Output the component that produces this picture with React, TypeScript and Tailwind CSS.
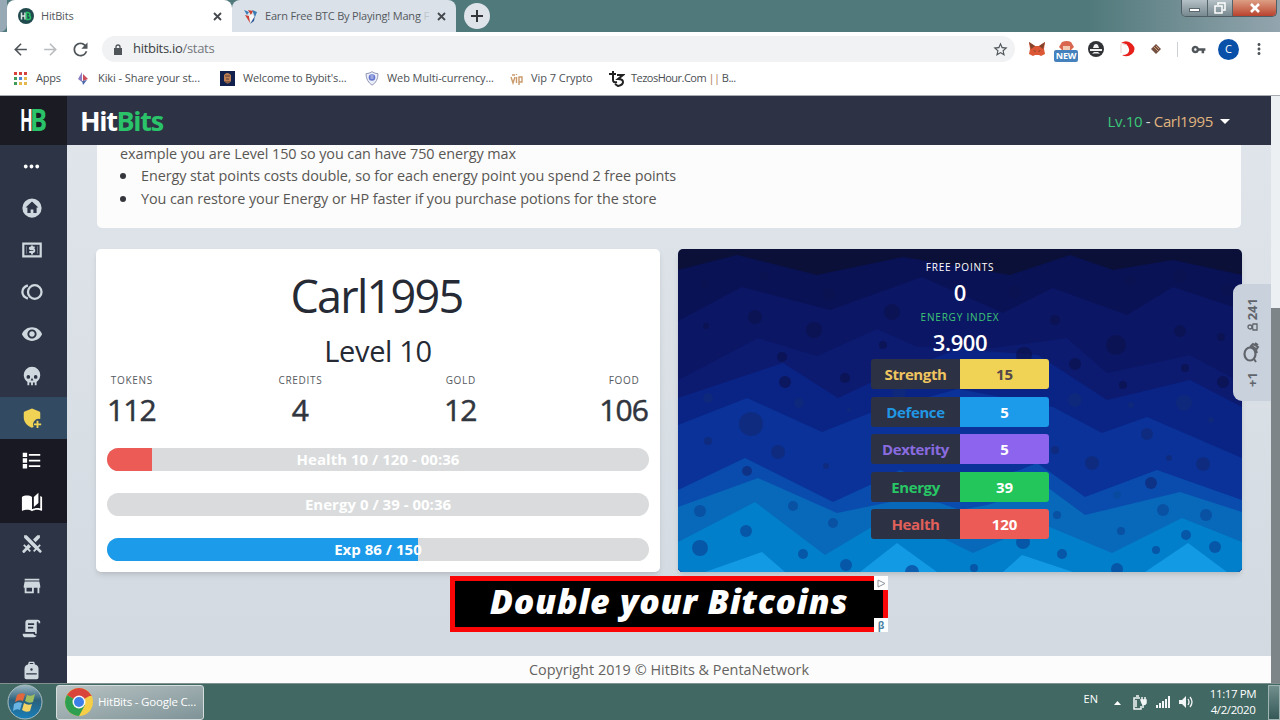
import type { ReactNode } from 'react';
import {
  MdArrowBack,
  MdArrowDropDown,
  MdArrowForward,
  MdMoreHoriz,
  MdMoreVert,
  MdRefresh,
  MdStarBorder,
  MdStore,
  MdVisibility,
  MdVpnKey,
} from 'react-icons/md';

function Glyph({ d, size = 22 }: { d: string; size?: number }) {
  return (
    <svg width={size} height={size} viewBox="0 0 24 24" fill="currentColor" fillRule="evenodd">
      <path d={d} />
    </svg>
  );
}

function CashIcon() {
  return (
    <svg width="22" height="22" viewBox="0 0 24 24" fill="none" stroke="currentColor" strokeWidth="2.4">
      <path d="M2.500 5h19v14h-19z" />
      <path d="M15 9.200h-4.500q-1 0-1 1t1 1h3q1 0 1 1v1q0 1-1 1H9M12 7v2M12 15v2" strokeWidth="2" />
      <path d="M6 8v8M18 8v8" strokeWidth="1" opacity="0.4" />
    </svg>
  );
}

function TokenIcon() {
  return (
    <svg width="22" height="22" viewBox="0 0 24 24" fill="none" stroke="currentColor" strokeWidth="2.500">
      <circle cx="15" cy="12" r="7.400" />
      <path d="M7.500 4.800Q1.500 7 1.500 12t6 7.200" />
    </svg>
  );
}

const paths = {
  home: 'M12 1.500a10.500 10.500 0 1 0 0 21a10.500 10.500 0 0 0 0-21M12 5L5 11.500h2v6h3.500v-4h3v4H17v-6h2z',
  skull:
    'M12,2A9,9 0 0,0 3,11C3,14.03 4.53,16.82 7,18.47V22H9V19H11V22H13V19H15V22H17V18.46C19.47,16.81 21,14 21,11A9,9 0 0,0 12,2M8,11A2,2 0 0,1 10,13A2,2 0 0,1 8,15A2,2 0 0,1 6,13A2,2 0 0,1 8,11M16,11A2,2 0 0,1 18,13A2,2 0 0,1 16,15A2,2 0 0,1 14,13A2,2 0 0,1 16,11M12,14L13.5,17H10.5L12,14Z',
  shield:
    'M12 1.5L4 5Q3 5.500 3 6.500V11.500C3 16.500 6.800 21 12 22.500C12.700 22.300 13.300 22.100 13.900 21.800A6 6 0 0 1 20.900 13.200Q21 12.400 21 11.500V6.500Q21 5.500 20 5ZM17 15V18H14V20H17V23H19V20H22V18H19V15Z',
  list: 'M2 3h5v5H2V3m7 1.500h13v2H9v-2M2 9.500h5v5H2v-5m7 1.500h13v2H9v-2M2 16h5v5H2v-5m7 1.500h13v2H9v-2',
  book: 'M19 2L14 6.5V17.5L19 13V2M6.5 5C4.55 5 2.45 5.4 1 6.5V21.16C1 21.41 1.25 21.66 1.5 21.66C1.6 21.66 1.65 21.59 1.75 21.59C3.1 20.94 5.05 20.5 6.5 20.5C8.45 20.5 10.55 20.9 12 22C13.35 21.15 15.8 20.5 17.5 20.5C19.15 20.5 20.85 20.81 22.25 21.56C22.35 21.61 22.4 21.59 22.5 21.59C22.75 21.59 23 21.34 23 21.09V6.5C22.4 6.05 21.75 5.75 21 5.5V19C19.9 18.65 18.7 18.5 17.5 18.5C15.8 18.5 13.35 19.15 12 20V6.5C10.55 5.4 8.45 5 6.5 5Z',
  swords:
    'M6.2,2.44L18.1,14.34L20.22,12.22L21.63,13.63L19.16,16.1L22.34,19.28C22.73,19.67 22.73,20.3 22.34,20.69L21.63,21.4C21.24,21.79 20.61,21.79 20.22,21.4L17,18.23L14.56,20.7L13.15,19.29L15.27,17.17L3.37,5.27V2.44H6.2M15.89,10L20.63,5.26V2.44H17.8L13.06,7.18L15.89,10M10.94,15L8.11,12.13L5.9,14.34L3.78,12.22L2.37,13.63L4.84,16.1L1.66,19.29C1.27,19.68 1.27,20.31 1.66,20.7L2.37,21.41C2.76,21.8 3.39,21.8 3.78,21.41L7,18.23L9.44,20.7L10.85,19.29L8.73,17.17L10.94,15Z',
  script:
    'M17.8,20C17.4,21.2 16.3,22 15,22H5C3.3,22 2,20.7 2,19V18H5L14.2,18C14.6,19.2 15.7,20 17,20H17.8M19,2C20.7,2 22,3.3 22,5V6H20V5C20,4.4 19.6,4 19,4C18.4,4 18,4.4 18,5V18H17C16.4,18 16,17.6 16,17V16H5V5C5,3.3 6.3,2 8,2H19M8,6V8H15V6H8M8,10V12H14V10H8Z',
  bag: 'M9 2h6l1 3q4 1 4 5v10q0 2-2 2H6q-2 0-2-2V10q0-4 4-5zM10 3.500v1h4v-1zM12 9.500a1.400 1.400 0 1 0 0 2.800a1.400 1.400 0 0 0 0-2.800M6 15v1.500h12V15z',
};

const navItems: { icon: ReactNode; className: string }[] = [
  { icon: <MdMoreHoriz size={23} />, className: 'text-white' },
  { icon: <Glyph d={paths.home} />, className: '' },
  { icon: <CashIcon />, className: '' },
  { icon: <TokenIcon />, className: '' },
  { icon: <MdVisibility size={22} />, className: '' },
  { icon: <Glyph d={paths.skull} />, className: '' },
  { icon: <Glyph d={paths.shield} />, className: 'bg-[#334a63] text-[#f0d355]' },
  { icon: <Glyph d={paths.list} size={21} />, className: 'bg-[#191923] text-white' },
  { icon: <Glyph d={paths.book} />, className: 'bg-[#191923] text-white' },
  { icon: <Glyph d={paths.swords} />, className: '' },
  { icon: <MdStore size={22} />, className: '' },
  { icon: <Glyph d={paths.script} size={21} />, className: '' },
  { icon: <Glyph d={paths.bag} size={21} />, className: '' },
];

const currencies = [
  { label: 'TOKENS', value: '112' },
  { label: 'CREDITS', value: '4' },
  { label: 'GOLD', value: '12' },
  { label: 'FOOD', value: '106' },
];

const bars = [
  { text: 'Health 10 / 120 - 00:36', percent: 8.33, color: 'bg-[#ec5b56]' },
  { text: 'Energy 0 / 39 - 00:36', percent: 0, color: 'bg-[#22c65b]' },
  { text: 'Exp 86 / 150', percent: 57.3, color: 'bg-[#1b9bea]' },
];

const attributes = [
  { name: 'Strength', value: 15, text: 'text-[#efc560]', fill: 'bg-[#f0d355] text-[#55484a]' },
  { name: 'Defence', value: 5, text: 'text-[#2197e3]', fill: 'bg-[#1b9bea] text-white' },
  { name: 'Dexterity', value: 5, text: 'text-[#8a6be0]', fill: 'bg-[#8c64ed] text-white' },
  { name: 'Energy', value: 39, text: 'text-[#28c766]', fill: 'bg-[#22c65b] text-white' },
  { name: 'Health', value: 120, text: 'text-[#e0605a]', fill: 'bg-[#ec5b56] text-white' },
];

const waves = [
  { color: '#0a1256', points: '0,21 59,6 139,26 225,8 332,26 392,6 435,21 495,11 564,26' },
  { color: '#0b1664', points: '0,72 64,38 152,61 244,28 325,64 375,39 449,66 495,38 564,61' },
  { color: '#0c1a70', points: '0,131 80,89 139,107 199,80 240,98 315,99 389,89 429,124 512,106 564,134' },
  { color: '#0a2486', points: '0,149 105,114 160,149 192,134 280,100 360,106 429,151 512,131 564,158' },
  { color: '#0a3298', points: '0,176 69,149 144,183 192,164 280,140 375,158 424,184 469,168 564,209' },
  { color: '#0a4cae', points: '0,241 67,209 155,253 192,236 222,221 270,240 342,221 359,214 407,248 479,221 564,251' },
  { color: '#0868b9', points: '0,258 80,229 159,264 222,251 262,254 282,261 309,256 369,238 407,266 502,243 564,263' },
  { color: '#027fca', points: '0,293 77,253 147,306 192,279 222,268 295,304 362,274 434,304 504,269 564,293' },
];

const peaks = ['27,323 84,303 107,323', '182,323 219,294 259,323', '325,323 344,306 395,323', '467,323 510,294 549,323'];

// x, y, radius
const bubbles = [
  [27, 35, 4], [86, 27, 5], [151, 45, 6], [77, 68, 7], [136, 81, 8], [28, 77, 3], [214, 63, 8],
  [104, 108, 5], [205, 96, 4], [107, 133, 6], [167, 129, 5], [30, 149, 5], [121, 154, 5], [171, 161, 2],
  [73, 175, 12], [30, 192, 4], [100, 203, 7], [69, 222, 5], [148, 217, 3], [22, 262, 6], [115, 257, 5],
  [68, 282, 6], [155, 274, 5], [22, 299, 8], [125, 305, 5], [168, 316, 6], [234, 323, 7], [221, 143, 7],
  [337, 43, 6], [377, 71, 5], [452, 32, 5], [502, 27, 7], [549, 41, 6], [438, 96, 10], [502, 82, 6],
  [543, 88, 4], [397, 115, 6], [346, 106, 8], [507, 119, 4], [445, 136, 4], [545, 133, 6], [397, 151, 7],
  [453, 156, 3], [506, 154, 8], [533, 171, 3], [469, 185, 6], [377, 201, 4], [414, 214, 7], [491, 209, 3],
  [525, 215, 7], [473, 234, 6], [439, 246, 4], [379, 266, 4], [485, 261, 6], [528, 266, 6], [443, 282, 4],
  [508, 286, 5], [345, 293, 7], [384, 305, 5], [478, 301, 4], [537, 298, 6], [296, 319, 4], [439, 320, 6],
];

function bubbleFill(y: number) {
  if (y < 140) return '#0c1350';
  return y > 240 ? '#0a4a9c' : '#102a78';
}

function WaveBackdrop() {
  return (
    <svg className="absolute inset-0 h-full w-full" viewBox="0 0 564 323" preserveAspectRatio="none">
      <rect width="564" height="323" fill="#0b1038" />
      {waves.map((w) => (
        <polygon key={w.color} fill={w.color} points={`${w.points} 564,323 0,323`} />
      ))}
      {peaks.map((p) => (
        <polygon key={p} fill="#139ae5" points={p} />
      ))}
      {bubbles.map(([x, y, r]) => (
        <circle key={`${x}-${y}`} cx={x} cy={y} r={r} fill={bubbleFill(y)} opacity="0.75" />
      ))}
    </svg>
  );
}

function CloseX() {
  return (
    <svg width="9" height="9" viewBox="0 0 9 9" stroke="#45494d" strokeWidth="1.8" className="shrink-0">
      <path d="M1 1l7 7M8 1L1 8" />
    </svg>
  );
}

function ChromeLogo({ size }: { size: number }) {
  return (
    <svg width={size} height={size} viewBox="0 0 28 28">
      <circle cx="14" cy="14" r="14" fill="#f6cf46" />
      <path d="M14 14L1.900 7A14 14 0 0 1 26.100 7z" fill="#d9453a" />
      <path d="M14 14L1.900 7A14 14 0 0 0 14 28L20 17z" fill="#2e9e51" />
      <path d="M14 8h12.600a14 14 0 0 0-.5-1H14z" fill="#d9453a" />
      <circle cx="14" cy="14" r="6.500" fill="#f7f7f7" />
      <circle cx="14" cy="14" r="5" fill="#3c7fe8" />
    </svg>
  );
}

function TabStrip() {
  return (
    <div className="relative flex h-8 bg-gradient-to-r from-[#50797b] from-85% to-[#93a5ae]">
      <div className="h-8 w-[7px] rounded-br-lg bg-[#97a9b5]" />
      <div className="flex h-8 w-[225px] items-center rounded-t-lg bg-white pr-[10px] pl-[11px]">
        <svg width="16" height="16" viewBox="0 0 16 16" className="mr-[7px]">
          <circle cx="8" cy="8" r="8" fill="#214a4e" />
          <path d="M3.500 4.500v7M7 4.500v7M3.500 8H7" stroke="#dce8e4" strokeWidth="1.500" />
          <path d="M8.500 4.500v7h2q2 0 2-2t-2-1.500q1.500-.3 1.500-1.700t-2-1.800z" fill="none" stroke="#27c067" strokeWidth="1.600" />
        </svg>
        <span className="flex-1 text-[11px] tracking-[-0.2px] text-[#55595d]">HitBits</span>
        <CloseX />
      </div>
      <div className="flex h-8 w-[224px] items-center rounded-t-lg bg-[#dae1e9] pr-[10px] pl-[11px]">
        <svg width="15" height="15" viewBox="0 0 15 15" className="mr-[7px] shrink-0">
          <path d="M1 1l5 2-2 3zM9 1l5 2-2 5z" fill="#3a7cb5" />
          <path d="M5 1l5 1-2 4zM2 6l4 1 1 7z" fill="#cc4036" />
          <path d="M6 7l3-2 3 4-4 5z" fill="#f7f7f7" />
          <path d="M12 7l-1 5-4 3 3-5z" fill="#2c5798" />
        </svg>
        <span className="flex-1 text-[11px] tracking-[-0.18px] whitespace-nowrap text-[#55595d]">
          Earn Free BTC By Playing! Mang <span className="opacity-20">F</span>
        </span>
        <CloseX />
      </div>
      <div className="mt-[3px] ml-[8px] flex h-[26px] w-[26px] items-center justify-center rounded-full bg-[#dfe3ea]">
        <svg width="12" height="12" stroke="#33373a" strokeWidth="2">
          <path d="M6 0v12M0 6h12" />
        </svg>
      </div>
      <div className="ml-auto mr-[3px] flex h-[17px] w-24 overflow-hidden rounded-b-[5px] border border-t-0 border-[#4f5e65]">
        <div className="flex w-[26px] items-center justify-center border-r border-[#53646b] bg-gradient-to-b from-[#b5c1c6] to-[#77898f]">
          <div className="mt-1 h-[4px] w-[11px] border border-[#5a676c] bg-white" />
        </div>
        <div className="flex w-[25px] items-center justify-center border-r border-[#53646b] bg-gradient-to-b from-[#b5c1c6] to-[#77898f]">
          <svg width="12" height="12" fill="none" stroke="#fff" strokeWidth="1.500">
            <path d="M4 3V1h7v7H9M1 4h7v7H1z" />
          </svg>
        </div>
        <div className="flex flex-1 items-center justify-center bg-gradient-to-b from-[#dc9e84] to-[#b8412d]">
          <svg width="12" height="10" stroke="#fff" strokeWidth="2.600">
            <path d="M2 1l8 8M10 1L2 9" />
          </svg>
        </div>
      </div>
    </div>
  );
}

function Toolbar() {
  return (
    <div className="flex h-[34px] items-center bg-white text-[#50555a]">
      <MdArrowBack size={19} className="ml-[11px]" />
      <MdArrowForward size={19} className="ml-[11px] text-[#b9bcbf]" />
      <MdRefresh size={21} className="ml-[10px]" />
      <div className="ml-[11px] flex h-[26px] w-[913px] items-center rounded-full bg-[#f1f2f4] pr-[6px] pl-[12px]">
        <svg width="8" height="11" viewBox="0 0 8 11">
          <path d="M0 4h8v7H0z" fill="currentColor" />
          <path d="M2 5V3q0-2 2-2t2 2v2" fill="none" stroke="currentColor" strokeWidth="1.300" />
        </svg>
        <span className="ml-[11px] flex-1 text-[13px] tracking-[-0.3px] text-[#3b3f43]">
          hitbits.io<span className="text-[#74787c]">/stats</span>
        </span>
        <MdStarBorder size={17} />
      </div>
      <svg width="16" height="15" viewBox="0 0 16 15" className="ml-[14px]">
        <path d="M0 0l6 4h4l6-4-1 7 1 5-4 2-2-1H6l-2 1-4-2 1-5z" fill="#db5735" />
        <path d="M0 0l6 4-4 3zM16 0l-6 4 4 3zM4 8l3 1-1 1zM12 8L9 9l1 1z" fill="#83442d" />
      </svg>
      <div className="ml-[9px] flex w-6 flex-col items-center pt-1">
        <svg width="15" height="9" viewBox="0 0 15 9">
          <path d="M0 6l3-5q5-2 9 0l3 5-3 3H3z" fill="#d9664f" />
          <path d="M4 5h7v4H4z" fill="#f3cab3" />
        </svg>
        <span className="h-[12px] w-6 rounded-[2px] bg-[#4581bd] text-center text-[9px] leading-[12px] font-bold tracking-[-0.2px] text-white">
          NEW
        </span>
      </div>
      <svg width="16" height="16" viewBox="0 0 16 16" className="ml-[10px]">
        <circle cx="8" cy="8" r="8" fill="#303236" />
        <path d="M5 7l1-3q2-2 4 0l1 3zM2 8h12v2H2zM4 13l2-2h4l2 2-2-.5H6z" fill="#f1f1f1" />
      </svg>
      <svg width="16" height="16" viewBox="0 0 16 16" className="ml-[15px]">
        <path d="M2 2Q8-2 13 3t0 10q-5 4-10 1 8 0 7-6T2 2z" fill="#e7201b" />
        <path d="M2 3v9M4 3l4 1" stroke="#ead2cf" />
      </svg>
      <svg width="10" height="10" viewBox="0 0 10 10" className="ml-[16px]">
        <path d="M5 0l5 5-5 5-5-5z" fill="#725142" />
        <path d="M3 3l4 4M5 2l3 3" stroke="#d69b74" />
      </svg>
      <div className="ml-[16px] h-[15px] w-px bg-[#cfd2d4]" />
      <MdVpnKey size={15} className="ml-[13px]" />
      <div className="ml-[12px] flex h-[21px] w-[21px] items-center justify-center rounded-full bg-[#0950a9] text-[11px] text-white">
        C
      </div>
      <MdMoreVert size={18} className="ml-[11px]" />
    </div>
  );
}

const appDots = ['#d5433b', '#d5433b', '#d5433b', '#3f9b57', '#4a84d2', '#e5b84b', '#3f9b57', '#e5b84b', '#e5b84b'];

function BookmarksBar() {
  return (
    <div className="flex h-[30px] items-center border-b border-[#a8abb2] bg-white pb-[4px] text-[11px] whitespace-nowrap text-[#4b4f53]">
      <div className="ml-[14px] grid grid-cols-3 gap-[2px]">
        {appDots.map((c, i) => (
          <span key={i} className="h-[3px] w-[3px]" style={{ backgroundColor: c }} />
        ))}
      </div>
      <span className="ml-[9px] w-[25px] tracking-[-0.2px]">Apps</span>
      <svg width="10" height="14" viewBox="0 0 10 14" className="ml-[17px]">
        <path d="M4 0v10L0 7z" fill="#8a7fc4" />
        <path d="M5 2l5 5-5 2z" fill="#cb4d5a" />
        <path d="M4 9l5-1-4 5z" fill="#4d68af" />
      </svg>
      <span className="ml-[10px] w-[102px] tracking-[-0.08px]">Kiki - Share your st...</span>
      <svg width="15" height="15" viewBox="0 0 15 15" className="ml-[20px]">
        <rect width="15" height="15" fill="#11204c" />
        <path d="M4 4q3-4 7 0v6q-3 5-7 0z" fill="#be8052" />
        <path d="M5 5h5M6 8h3M5 11h5" stroke="#593a38" />
      </svg>
      <span className="ml-[8px] w-[104px] tracking-[-0.12px]">Welcome to Bybit's...</span>
      <svg width="14" height="15" viewBox="0 0 14 15" className="ml-[18px]">
        <path d="M7 .7q3 2 6 2 0 8-6 11.500Q1 10 1 2.700q3 0 6-2z" fill="#eceef8" stroke="#9299b7" />
        <circle cx="7" cy="6.500" r="3.300" fill="#6577ce" />
        <path d="M5.500 5h3M5.500 7h3" stroke="#d9ddf5" />
      </svg>
      <span className="ml-[8px] w-[107px] tracking-[-0.1px]">Web Multi-currency...</span>
      <svg width="13" height="12" viewBox="0 0 13 12" className="ml-[16px]" fill="none" stroke="#ca9a6b" strokeWidth="1.400">
        <path d="M1 4l2 6 2-6M6.500 4v6M6.500 1v1M9 12V4h3v5H9M2 2h3" />
      </svg>
      <span className="ml-[8px] w-[62px] tracking-[-0.05px]">Vip 7 Crypto</span>
      <svg width="16" height="16" viewBox="0 0 16 16" className="ml-[16px]" fill="none" stroke="#222" strokeWidth="2">
        <path d="M0 3h7M4 0v9q0 3 4 2M8 4h6l-5 4q5 0 5 3t-5 4l-3-2" />
      </svg>
      <span className="ml-[6px] w-[106px] tracking-[-0.52px]">
        TezosHour.Com <span className="text-[#b27956]">||</span> B...
      </span>
    </div>
  );
}

function Sidebar() {
  return (
    <nav className="flex h-full w-[67px] shrink-0 flex-col overflow-hidden bg-[#2d3445]">
      <div className="flex h-[49px] shrink-0 items-center bg-[#1b1c23] pl-[20px] text-[30px] leading-[40px] font-bold text-white">
        <span className="w-[10px] origin-left scale-x-[0.56] pb-[1px]">H</span>
        <span className="origin-left scale-x-[0.85] pb-[1px] text-[#2ac36a]">B</span>
      </div>
      {navItems.map((item, i) => (
        <div
          key={i}
          className={`flex h-[42px] shrink-0 items-center justify-center pr-[4px] text-[#d0d8df] ${item.className}`}
        >
          {item.icon}
        </div>
      ))}
    </nav>
  );
}

function ProfileCard() {
  return (
    <section className="flex h-[323px] w-[564px] flex-col rounded-[5px] bg-white px-[11px] text-[#252a34] shadow-md">
      <h1 className="mt-[18px] pr-[3px] text-center text-[45px] leading-[58px] tracking-[-1.75px]">Carl1995</h1>
      <h2 className="mt-[7px] text-center text-[29px] leading-[38px] tracking-[-0.35px]">Level 10</h2>
      <div className="mt-px flex justify-between">
        {currencies.map((c) => (
          <div key={c.label} className="flex flex-col items-center">
            <span className="h-[18px] text-[10px] leading-[19px] tracking-[0.7px] text-[#555a61]">{c.label}</span>
            <span className="pr-px text-[30px] leading-[42px] tracking-[-0.9px] text-[#30353e] [-webkit-text-stroke:0.5px_#30353e]">
              {c.value}
            </span>
          </div>
        ))}
      </div>
      <div className="mt-[17px] flex flex-col gap-[22px]">
        {bars.map((b) => (
          <div key={b.text} className="relative h-[23px] overflow-hidden rounded-full bg-[#d9dbdc]">
            <div className={`h-full ${b.color}`} style={{ width: `${b.percent}%` }} />
            <span className="absolute inset-0 text-center text-[15px] leading-[23px] font-bold tracking-[0.02px] text-white">
              {b.text}
            </span>
          </div>
        ))}
      </div>
    </section>
  );
}

function AttributesCard() {
  return (
    <section className="relative h-[323px] w-[564px] overflow-hidden rounded-[5px] shadow-md">
      <WaveBackdrop />
      <div className="relative flex flex-col items-center text-white">
        <span className="mt-[9px] h-[19px] text-[10px] leading-[18px] tracking-[0.75px]">FREE POINTS</span>
        <span className="h-[32px] text-[22px] leading-[31px] font-semibold">0</span>
        <span className="text-[10px] leading-[17px] tracking-[0.8px] text-[#3fc776]">ENERGY INDEX</span>
        <span className="h-[33px] text-[22px] leading-[32px] font-semibold tracking-[-0.4px]">3.900</span>
        <div className="flex flex-col gap-[7.500px]">
          {attributes.map((a) => (
            <div key={a.name} className="flex h-[30px] w-[178px] overflow-hidden rounded-[3px] text-[15px] leading-[30px] font-bold">
              <span className={`w-[89px] bg-[#2c3143] text-center tracking-[-0.4px] ${a.text}`}>{a.name}</span>
              <span className={`w-[89px] text-center text-[15px] ${a.fill}`}>{a.value}</span>
            </div>
          ))}
        </div>
      </div>
    </section>
  );
}

function OnlineTab() {
  return (
    <div className="absolute top-[188px] right-0 flex h-[117px] w-[38px] flex-col items-center justify-between rounded-l-[9px] bg-[#c8d1dc] py-[14px] text-[#61656b]">
      <div className="flex flex-col items-center gap-[2px]">
        <span className="text-[13px] leading-[14px] font-bold [writing-mode:sideways-lr]">241</span>
        <svg width="11" height="10" viewBox="0 0 11 10" fill="none" stroke="currentColor" strokeWidth="1.300">
          <circle cx="3" cy="5" r="2" />
          <path d="M6 2q-1 3 0 6h4V2z" />
        </svg>
      </div>
      <svg width="17" height="21" viewBox="0 0 17 21" fill="none" stroke="currentColor" className="-ml-[2px]">
        <ellipse cx="7" cy="12" rx="5.500" ry="6.500" strokeWidth="2.200" />
        <path d="M7 5l3-3 2 1 3 2-2 3 1 3M9 4l4 3M12 1l3 2M11 17l2 3" strokeWidth="2" />
      </svg>
      <span className="text-[13px] leading-[14px] font-bold [writing-mode:sideways-lr]">+1</span>
    </div>
  );
}

function AdBanner() {
  return (
    <div className="relative mx-auto mt-[4px] flex h-[56px] w-[438px] items-center justify-center border-[5px] border-[#fb0606] bg-black">
      <span className="pb-[7px] text-[34px] leading-[44px] font-extrabold tracking-[0.7px] whitespace-nowrap text-white italic">
        Double your Bitcoins
      </span>
      <div className="absolute -top-[5px] -right-[5px] flex h-[14px] w-[14px] items-center justify-center bg-white">
        <svg width="9" height="9" fill="none" stroke="#8b969f">
          <path d="M1 1l7 3.500L1 8z" />
        </svg>
      </div>
      <div className="absolute -right-[5px] -bottom-[5px] flex h-[14px] w-[14px] items-center justify-center bg-white text-[10px] leading-none font-bold text-[#4b83a4]">
        β
      </div>
    </div>
  );
}

function Taskbar() {
  return (
    <footer className="flex h-[37px] items-center border-t border-[#80918f] bg-[#416863] text-white">
      <svg width="36" height="36" viewBox="0 0 36 36" className="ml-[7px]">
        <defs>
          <linearGradient id="orb" x2="0" y2="1">
            <stop stopColor="#9db6c0" />
            <stop offset=".45" stopColor="#2b607c" />
            <stop offset="1" stopColor="#1680bb" />
          </linearGradient>
        </defs>
        <circle cx="18" cy="18" r="17" fill="url(#orb)" stroke="#a9bdc1" />
        <path d="M10 11q4-3 8-1l-2 7q-4-2-8 1z" fill="#e2673c" />
        <path d="M20 11q4 2 8-1l-2 8q-4 2-8-1z" fill="#9dbd60" />
        <path d="M7 20q4-3 8-1l-2 7q-3-2-7 1z" fill="#69b4e4" />
        <path d="M17 19q4 3 8 1l-2 7q-4 2-8-1z" fill="#f4d365" />
      </svg>
      <div className="ml-[13px] flex h-[35px] w-[148px] items-center rounded-[3px] border border-[#d6dddd] bg-gradient-to-br from-[#b8c2c4] to-[#7f9497] pl-[8px] whitespace-nowrap">
        <ChromeLogo size={28} />
        <span className="ml-[5px] text-[11.500px] tracking-[-0.2px]">HitBits - Google C...</span>
      </div>
      <span className="ml-auto mb-[5px] text-[11px]">EN</span>
      <svg width="7" height="4" className="mt-[2px] ml-[16px]" fill="#fff">
        <path d="M3.500 0L7 4H0z" />
      </svg>
      <svg width="14" height="15" viewBox="0 0 14 15" className="ml-[12px]" fill="none" stroke="#f3f6f6" strokeWidth="1.500">
        <path d="M7 3H1v11h7v-3M3 1h3M3 5v7" />
        <path d="M8 5h5v3q-2 3-4 0z" fill="#f3f6f6" />
        <path d="M9 2v3M12 2v3M10 9v4" />
      </svg>
      <svg width="15" height="12" className="ml-[9px]" fill="#f3f6f6">
        <path d="M0 9h2v3H0zM3 7h2v5H3zM6 5h2v7H6zM9 3h2v9H9zM12 0h2v12h-2z" />
      </svg>
      <svg width="14" height="14" className="ml-[8px]" fill="#f3f6f6">
        <path d="M0 5h3l4-4v12L3 9H0z" />
        <path d="M9 4q2 3 0 6M11 2q4 5 0 10" fill="none" stroke="#f3f6f6" strokeWidth="1.300" />
      </svg>
      <div className="ml-[12px] flex w-[56px] flex-col items-center text-[11.500px] leading-[16px] tracking-[-0.4px] whitespace-nowrap">
        <span>11:17 PM</span>
        <span>4/2/2020</span>
      </div>
      <div className="ml-[7px] h-[35px] w-[12px] border border-[#9fb5b3] bg-gradient-to-b from-[#718f8d] to-[#355958]" />
    </footer>
  );
}

export default function App() {
  return (
    <div className="flex h-[720px] w-[1280px] flex-col overflow-hidden font-['Open_Sans','Noto_Sans',sans-serif]">
      <TabStrip />
      <Toolbar />
      <BookmarksBar />
      <div className="relative flex h-[587px]">
        <Sidebar />
        <div className="relative flex w-[1204px] flex-col bg-gradient-to-b from-[#e0e6eb] to-[#d2d9e0]">
          <header className="flex h-[49px] shrink-0 items-center justify-between bg-[#2d3344] pr-[36px] pl-[13px]">
            <span className="pt-[1px] text-[27px] leading-[40px] font-bold tracking-[-1.35px] text-white">
              Hit<span className="text-[#2ac36a]">Bits</span>
            </span>
            <span className="flex items-center pt-px text-[15px] tracking-[-0.35px] text-[#e0b47f]">
              <span className="whitespace-pre">
                <span className="text-[#3bc77a]">Lv.10</span>
                <span className="text-[#d6d7d6]"> - </span>Carl1995
              </span>
              <MdArrowDropDown size={24} className="-mr-[2px] text-white" />
            </span>
          </header>
          <section className="ml-[30px] h-[83px] w-[1144px] rounded-b-[5px] bg-[#fcfcfc] pl-[23px] text-[14.400px] leading-[22.500px] tracking-[-0.07px] text-[#595754]">
            <p className="h-[20px] leading-[17px]">example you are Level 150 so you can have 750 energy max</p>
            <ul>
              {[
                'Energy stat points costs double, so for each energy point you spend 2 free points',
                'You can restore your Energy or HP faster if you purchase potions for the store',
              ].map((line) => (
                <li key={line} className="flex items-center">
                  <span className="mr-[15px] h-[6px] w-[6px] rounded-full bg-[#34363b]" />
                  {line}
                </li>
              ))}
            </ul>
          </section>
          <div className="mt-[21px] ml-[29px] flex gap-[18px]">
            <ProfileCard />
            <AttributesCard />
          </div>
          <AdBanner />
          <div className="mt-auto h-[27px] bg-[#fcfcfc] text-center text-[14.400px] leading-[27px] tracking-[0.02px] text-[#65635f]">
            Copyright 2019 © HitBits &amp; PentaNetwork
          </div>
          <OnlineTab />
        </div>
        <div className="w-[9px] bg-[#edf0f2] pt-[212px]">
          <div className="h-full bg-[#7d8588]" />
        </div>
      </div>
      <Taskbar />
    </div>
  );
}
